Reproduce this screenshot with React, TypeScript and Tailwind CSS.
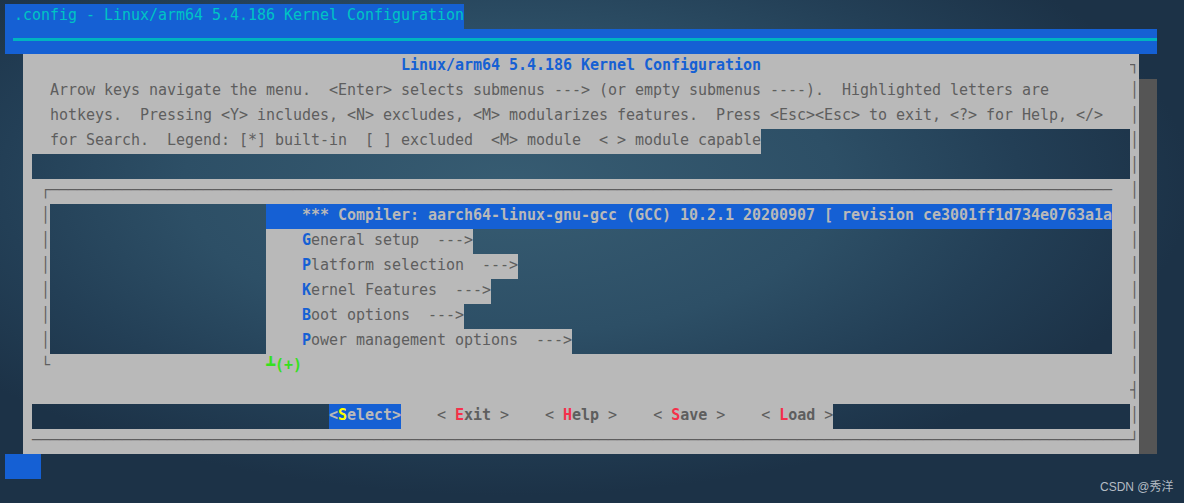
function Hot({ c, t }: { c: string; t: string }) {
  return <span className={`font-bold ${c}`}>{t}</span>;
}

function Row({ children }: { children: React.ReactNode }) {
  return <div className="flex h-[25px] w-[1116px] shrink-0 overflow-hidden">{children}</div>;
}

function Grey({ w, children }: { w: string; children?: React.ReactNode }) {
  return <div className={`${w} h-[25px] shrink-0 overflow-hidden bg-[#b9b9b9] whitespace-pre`}>{children}</div>;
}

function Side({ ch = "│" }: { ch?: string }) {
  return <Grey w="w-[9px]">{ch}</Grey>;
}

function MenuRow({ w, hole, hot, rest }: { w: string; hole: string; hot: string; rest: string }) {
  return (
    <Row>
      <Grey w="w-[27px]">{"  │"}</Grey>
      <div className="w-[216px] shrink-0" />
      <Grey w={w}>
        {"    "}
        <Hot c="text-[#1560d4]" t={hot} />
        {rest}
      </Grey>
      <div className={`${hole} shrink-0`} />
      <Grey w="w-[18px]" />
      <Side />
    </Row>
  );
}

function Button({ hot, rest }: { hot: string; rest: string }) {
  return (
    <>
      {"    < "}
      <Hot c="text-[#f5304a]" t={hot} />
      <span className="font-bold">{rest}</span>
      {" >"}
    </>
  );
}

export default function App() {
  return (
    <div className="relative flex h-[503px] w-[1184px] flex-col overflow-hidden bg-[#1c3247] bg-[radial-gradient(ellipse_680px_310px_at_510px_185px,#375c72_0%,#2d4f66_48%,#233f56_75%,#1c3247_100%)] pl-[5px] pt-[4px] font-['DejaVu_Sans_Mono',monospace] text-[15px] leading-[23px] tracking-[-0.03px] text-[#5e5e5e]">
      <div className="h-[25px] w-[459px] whitespace-pre bg-[#1560d4] pl-[9px] text-[#00c4c4]">
        .config - Linux/arm64 5.4.186 Kernel Configuration
      </div>
      <div className="flex h-[25px] w-[1152px] bg-[#1560d4] pl-[8px] pt-[9px]">
        <div className="h-[3px] w-full bg-[#00b4c0]" />
      </div>

      <div className="ml-[18px] flex h-[400px] w-[1134px]">
        <div className="flex w-[1116px] flex-col">
          <Row>
            <Grey w="w-[1107px]">
              <span className="font-bold text-[#1560d4]">
                {"                                          Linux/arm64 5.4.186 Kernel Configuration"}
              </span>
            </Grey>
            <Side ch="┐" />
          </Row>
          <Row>
            <Grey w="w-[1107px]">
              {"   Arrow keys navigate the menu.  <Enter> selects submenus ---> (or empty submenus ----).  Highlighted letters are"}
            </Grey>
            <Side />
          </Row>
          <Row>
            <Grey w="w-[1107px]">
              {"   hotkeys.  Pressing <Y> includes, <N> excludes, <M> modularizes features.  Press <Esc><Esc> to exit, <?> for Help, </>"}
            </Grey>
            <Side />
          </Row>
          <Row>
            <Grey w="w-[738px]">
              {"   for Search.  Legend: [*] built-in  [ ] excluded  <M> module  < > module capable"}
            </Grey>
            <div className="w-[369px] shrink-0" />
            <Side />
          </Row>
          <Row>
            <Grey w="w-[9px]" />
            <div className="w-[1098px] shrink-0" />
            <Side />
          </Row>
          <Row>
            <Grey w="w-[1107px]">{"  ┌" + "─".repeat(118)}</Grey>
            <Side />
          </Row>
          <Row>
            <Grey w="w-[27px]">{"  │"}</Grey>
            <div className="w-[216px] shrink-0" />
            <div className="h-[25px] w-[846px] shrink-0 overflow-hidden whitespace-pre bg-[#1560d4] font-bold text-[#b9b9b9]">
              {"    *** Compiler: aarch64-linux-gnu-gcc (GCC) 10.2.1 20200907 [ revision ce3001ff1d734e0763a1a"}
            </div>
            <Grey w="w-[18px]" />
            <Side />
          </Row>
          <MenuRow w="w-[207px]" hole="w-[639px]" hot="G" rest="eneral setup  --->" />
          <MenuRow w="w-[252px]" hole="w-[594px]" hot="P" rest="latform selection  --->" />
          <MenuRow w="w-[225px]" hole="w-[621px]" hot="K" rest="ernel Features  --->" />
          <MenuRow w="w-[198px]" hole="w-[648px]" hot="B" rest="oot options  --->" />
          <MenuRow w="w-[306px]" hole="w-[540px]" hot="P" rest="ower management options  --->" />
          <Row>
            <Grey w="w-[1107px]">
              {"  └" + " ".repeat(24)}
              <span className="font-bold text-[#35e01e]">{"┻(+)"}</span>
            </Grey>
            <Side />
          </Row>
          <Row>
            <Grey w="w-[1107px]" />
            <Side ch="┤" />
          </Row>
          <Row>
            <Grey w="w-[9px]" />
            <div className="w-[297px] shrink-0" />
            <div className="h-[25px] w-[72px] shrink-0 whitespace-pre bg-[#1560d4] font-bold text-[#b9b9b9]">
              {"<"}
              <span className="text-[#ffff00]">S</span>
              {"elect>"}
            </div>
            <Grey w="w-[432px]">
              <Button hot="E" rest="xit" />
              <Button hot="H" rest="elp" />
              <Button hot="S" rest="ave" />
              <Button hot="L" rest="oad" />
            </Grey>
            <div className="w-[297px] shrink-0" />
            <Side />
          </Row>
          <Row>
            <Grey w="w-[1107px]">{" " + "─".repeat(122)}</Grey>
            <Side ch="┘" />
          </Row>
        </div>
        <div className="mt-[25px] w-[18px] bg-[#555555]" />
      </div>

      <div className="h-[25px] w-[36px] bg-[#1560d4]" />

      <div className="absolute left-[1100px] top-[479px] font-['Liberation_Sans','Noto_Sans_CJK_SC',sans-serif] text-[12px] leading-[17px] tracking-normal text-[#b4bcc4]">
        CSDN @秀洋
      </div>
    </div>
  );
}
